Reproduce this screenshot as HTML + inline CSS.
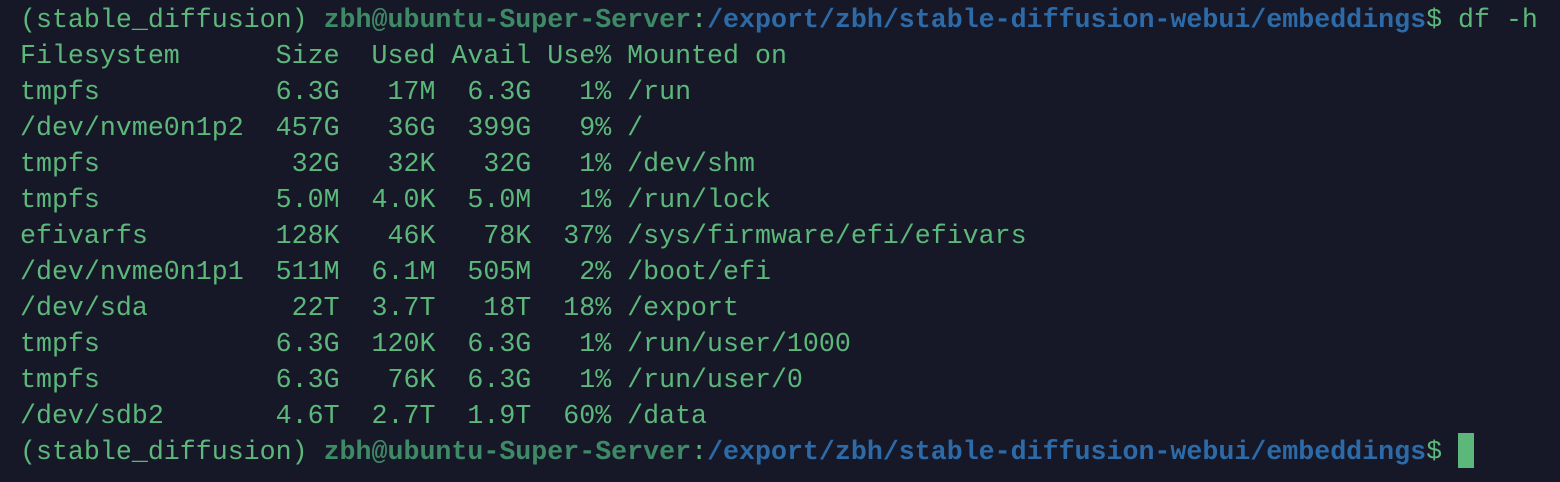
<!DOCTYPE html>
<html><head><meta charset="utf-8"><style>
html,body{margin:0;padding:0;background:#161828;width:1560px;height:482px;overflow:hidden}
pre{margin:0;position:absolute;left:20px;top:2px;font-family:"Liberation Mono","DejaVu Sans Mono",monospace;font-size:26.63px;line-height:36px;color:#5cb87a}
.u{color:#3f8a66;font-weight:bold}
.p{color:#2d6aa8;font-weight:bold}
.c{display:inline-block;width:16px;height:35px;background:#5cb87a;vertical-align:top;margin-top:-1px}
</style></head><body><pre>(stable_diffusion) <span class="u">zbh@ubuntu-Super-Server</span>:<span class="p">/export/zbh/stable-diffusion-webui/embeddings</span>$ df -h
Filesystem      Size  Used Avail Use% Mounted on
tmpfs           6.3G   17M  6.3G   1% /run
/dev/nvme0n1p2  457G   36G  399G   9% /
tmpfs            32G   32K   32G   1% /dev/shm
tmpfs           5.0M  4.0K  5.0M   1% /run/lock
efivarfs        128K   46K   78K  37% /sys/firmware/efi/efivars
/dev/nvme0n1p1  511M  6.1M  505M   2% /boot/efi
/dev/sda         22T  3.7T   18T  18% /export
tmpfs           6.3G  120K  6.3G   1% /run/user/1000
tmpfs           6.3G   76K  6.3G   1% /run/user/0
/dev/sdb2       4.6T  2.7T  1.9T  60% /data
(stable_diffusion) <span class="u">zbh@ubuntu-Super-Server</span>:<span class="p">/export/zbh/stable-diffusion-webui/embeddings</span>$ <span class="c"></span></pre></body></html>
